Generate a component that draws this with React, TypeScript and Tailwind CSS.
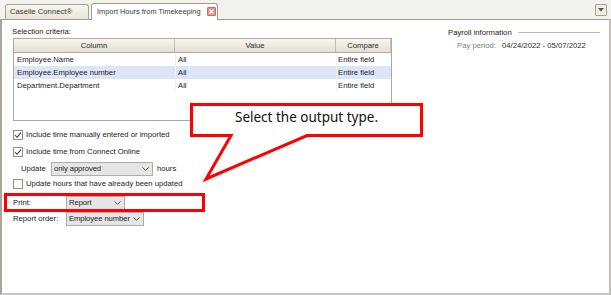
import { ReactNode } from 'react';

/**
 * Import Hours from Timekeeping — Caselle Connect workspace tab with the
 * "Select the output type." callout over the Print row.
 */
const rows = [
  { column: 'Employee.Name', value: 'All', compare: 'Entire field' },
  { column: 'Employee.Employee number', value: 'All', compare: 'Entire field', selected: true },
  { column: 'Department.Department', value: 'All', compare: 'Entire field' },
];

export default function App() {
  return (
    <div className="relative h-[295px] w-[611px] overflow-hidden bg-white font-['Liberation_Sans',Arial,sans-serif] text-[7.7px] leading-none whitespace-nowrap text-[#1b1b1b]">
      <TabBar />

      {/* Workspace panel */}
      <div className="flex h-[276px] border-t border-r-2 border-b-2 border-l-2 border-t-[#a39d90] border-r-[#c4c1ba] border-b-[#c6c6c6] border-l-[#aaa59c]">
        <div className="w-[400px] pt-[7px] pl-[10px]">
          <p className="h-[10px] leading-[10px]">Selection criteria:</p>
          <CriteriaTable />

          <div className="mt-[7px] ml-[1px] flex flex-col">
            <CheckRow label="Include time manually entered or imported" checked />
            <div className="mt-[3px]">
              <CheckRow label="Include time from Connect Online" checked />
            </div>
            <div className="mt-[2px] flex h-[16px] items-center pl-[8px]">
              <span className="w-[30px]">Update</span>
              <Select value="only approved" width="w-[102px]" />
              <span className="ml-[4px]">hours</span>
            </div>
            <CheckRow label="Update hours that have already been updated" />
            <div className="mt-[5px] flex h-[14px] items-center">
              <span className="w-[53px]">Print:</span>
              <Select value="Report" width="w-[59px]" />
            </div>
            <div className="mt-[2px] flex h-[14px] items-center">
              <span className="w-[53px]">Report order:</span>
              <Select value="Employee number" width="w-[78px]" />
            </div>
          </div>
        </div>

        {/* Payroll information */}
        <div className="flex-1 pt-[9px] pr-[9px] pl-[46px]">
          <div className="flex items-center gap-[6px]">
            <span>Payroll information</span>
            <span className="h-px flex-1 bg-[#b9b9b9]" />
          </div>
          <div className="mt-[5px] flex items-center pl-[9px]">
            <span className="w-[45px] text-[#7d7d7d]">Pay period:</span>
            <span className="text-[#2c2c2c]">04/24/2022 - 05/07/2022</span>
          </div>
        </div>
      </div>

      {/* Highlight around the Print row */}
      <div className="absolute top-[193px] left-[4px] h-[19px] w-[201px] border-[3px] border-[#ff0000]" />

      {/* Callout */}
      <svg className="pointer-events-none absolute top-0 left-0" width="611" height="295">
        <path
          d="M191.5 104.5 H421.5 V135.5 H307 L206 179 L231 135.5 H191.5 Z"
          fill="#ffffff"
          stroke="#ff0000"
          strokeWidth="3"
          strokeLinejoin="miter"
        />
      </svg>
      <div className="absolute top-[103px] left-[190px] flex h-[34px] w-[233px] items-center justify-center pb-[4px] font-['Noto_Sans',sans-serif] text-[13.5px] text-[#111]">
        Select the output type.
      </div>
    </div>
  );
}

/* ── Tabs ─────────────────────────────── */

function TabBar() {
  return (
    <div className="flex h-[19px] items-end bg-[#f2f2ee] pl-[5px]">
      <div className="flex h-[15px] w-[84px] items-center rounded-t-[3px] border-t border-r border-l border-[#aaa496] bg-gradient-to-b from-[#f7f6f1] to-[#e8e5da] pl-[4px] text-[#3a3a3a]">
        Caselle Connect®
      </div>
      <div className="relative z-10 mb-[-1px] ml-[2px] flex h-[17px] w-[127px] items-center rounded-t-[3px] border-t border-r border-l border-[#a39a88] bg-white pb-[1px] pl-[5px] text-[#3a3a3a]">
        <span className="flex-1 text-[7.4px] leading-[10px]">Import Hours from Timekeeping</span>
        <span className="mr-[1px] ml-[2px] flex h-[9px] w-[9px] shrink-0 items-center justify-center rounded-[1px] border border-[#c9706a] bg-[#f08c86]">
          <svg width="5" height="5" viewBox="0 0 5 5">
            <path d="M0.5 0.5 L4.5 4.5 M4.5 0.5 L0.5 4.5" stroke="#ffffff" strokeWidth="1.3" />
          </svg>
        </span>
      </div>
      <div className="mr-[4px] mb-[3px] ml-auto flex h-[12px] w-[12px] items-center justify-center rounded-[1px] border border-[#a8a294] bg-[#efeee8]">
        <svg width="6" height="4" viewBox="0 0 6 4">
          <path d="M0 0 H6 L3 3.5 Z" fill="#555" />
        </svg>
      </div>
    </div>
  );
}

/* ── Selection criteria grid ─────────────────────────────── */

function CriteriaTable() {
  return (
    <div className="mt-px ml-px h-[83px] w-[379px] border border-[#a8a8a8] border-t-[#b3ab9c]">
      <div className="flex h-[14px] border-b border-[#b8ab94] bg-gradient-to-b from-[#f8f6f0] to-[#e4dfd3] text-[#2a2a2a]">
        <HeaderCell width="w-[161px]">Column</HeaderCell>
        <HeaderCell width="w-[161px]">Value</HeaderCell>
        <div className="flex flex-1 items-center justify-center rounded-tr-[2px] border-r border-[#c9c1b1]">Compare</div>
      </div>
      {rows.map((row) => (
        <div
          key={row.column}
          className={`flex h-[13px] items-center ${row.selected ? 'bg-[#dde6f6]' : ''}`}
        >
          <span className="w-[161px] pl-[3px]">{row.column}</span>
          <span className="h-full w-px bg-[#f1f1f1]" />
          <span className="w-[160px] pl-[2px]">{row.value}</span>
          <span className="h-full w-px bg-[#f1f1f1]" />
          <span className="flex-1 pl-[1px]">{row.compare}</span>
        </div>
      ))}
    </div>
  );
}

function HeaderCell({ width, children }: { width: string; children: ReactNode }) {
  return (
    <div className={`flex ${width} items-center justify-center border-r border-[#c4bba9]`}>{children}</div>
  );
}

/* ── Form controls ─────────────────────────────── */

function CheckRow({ label, checked = false }: { label: string; checked?: boolean }) {
  return (
    <div className="flex h-[14px] items-center">
      <span className="flex h-[10px] w-[10px] items-center justify-center border border-[#8e8f8f] bg-white">
        {checked && (
          <svg width="8" height="8" viewBox="0 0 8 8">
            <path d="M1 4.2 L3.1 6.3 L7 1.6" fill="none" stroke="#3a3a3a" strokeWidth="1.1" />
          </svg>
        )}
      </span>
      <span className="ml-[3px]">{label}</span>
    </div>
  );
}

function Select({ value, width }: { value: string; width: string }) {
  return (
    <div
      className={`flex h-[14px] ${width} items-center justify-between gap-[2px] border border-[#adadad] bg-[#e5e5e5] pr-[3px] pl-[2px]`}
    >
      <span className="tracking-[-0.1px]">{value}</span>
      <svg className="shrink-0" width="7" height="4" viewBox="0 0 7 4">
        <path d="M0.5 0.5 L3.5 3.3 L6.5 0.5" fill="none" stroke="#555" strokeWidth="1" />
      </svg>
    </div>
  );
}
